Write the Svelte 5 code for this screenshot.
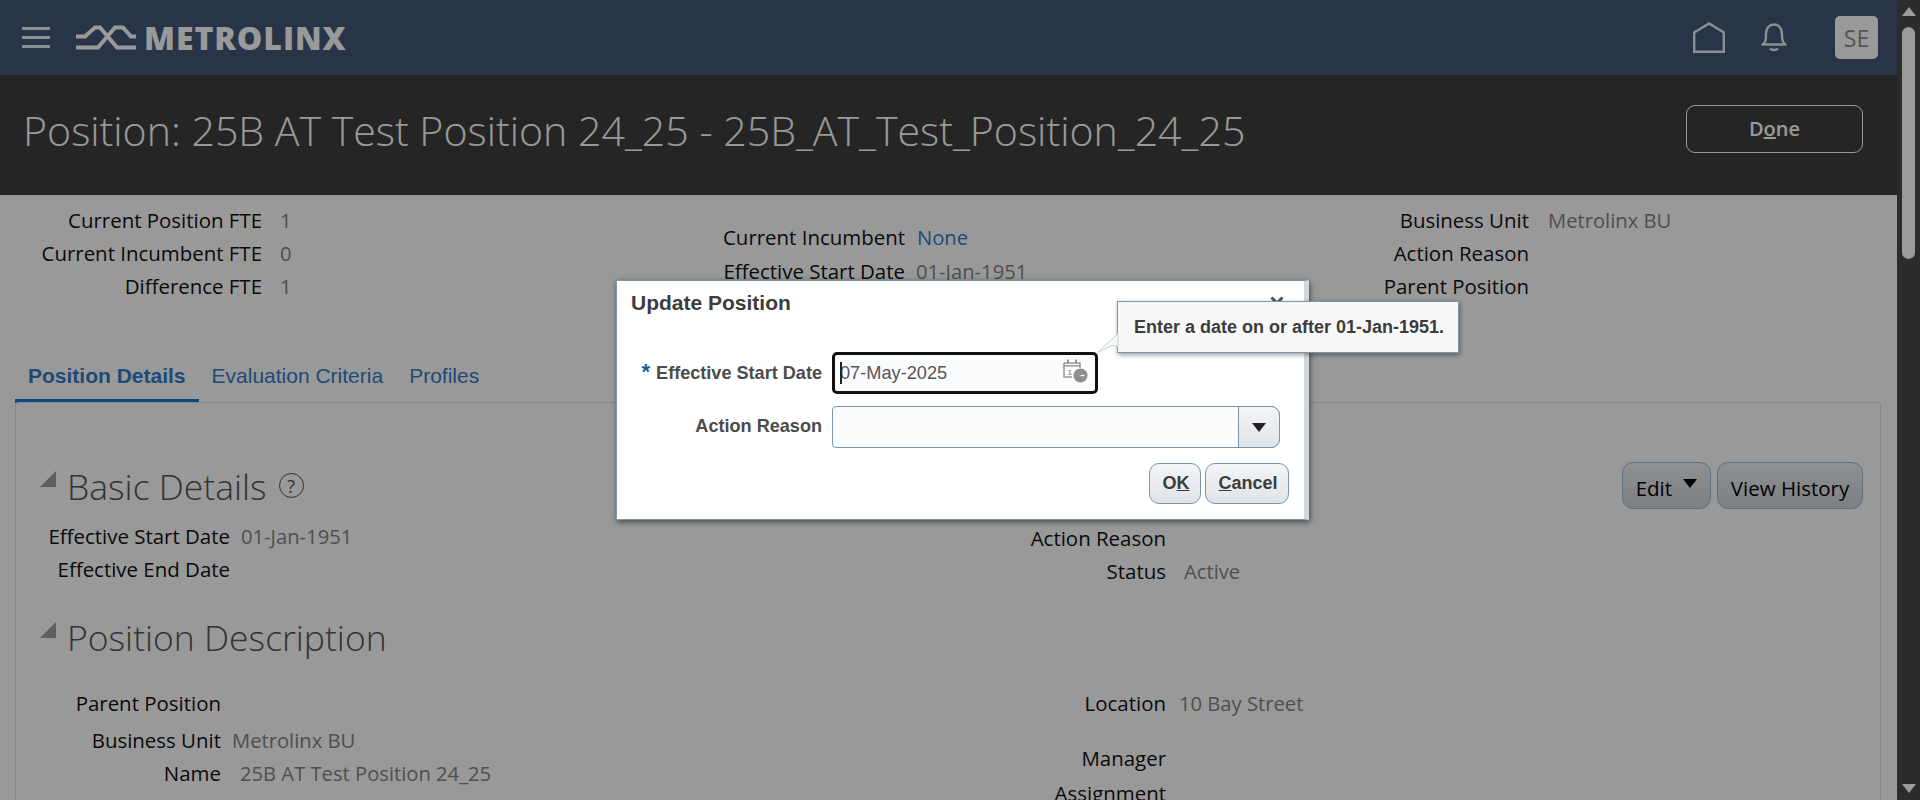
<script>
  const hdrL = [['Current Position FTE','1'],['Current Incumbent FTE','0'],['Difference FTE','1']];
  const hdrR = [['Business Unit','Metrolinx BU'],['Action Reason',''],['Parent Position','']];
</script>

<div class="page">
  <header class="top">
    <div class="burger"><i></i><i></i><i></i></div>
    <svg class="logo" viewBox="0 0 60 25" width="60" height="25" aria-hidden="true">
      <path d="M0 11.500H9L19 2.500H24L41 22.500H60" fill="none" stroke="#fff" stroke-width="4"/>
      <path d="M0 22.500H22L39 2.500H47L55 11.500H60" fill="none" stroke="#fff" stroke-width="4"/>
    </svg>
    <span class="brand">METROLINX</span>
    <span class="spacer"></span>
    <svg class="home" viewBox="0 0 32 31" width="32" height="31" aria-hidden="true">
      <path d="M1.200 10.500L16 1.500L30.800 10.500V29.800H1.200Z" fill="none" stroke="#e8eef5" stroke-width="2.400"/>
    </svg>
    <svg class="bell" viewBox="0 0 26 29" width="26" height="29" aria-hidden="true">
      <path d="M1.500 21.500C4.500 19.500 5 17 5 11C5 5 8.500 1.500 13 1.500S21 5 21 11C21 17 21.500 19.500 24.500 21.500Z" fill="none" stroke="#e8eef5" stroke-width="2.400" stroke-linejoin="round"/>
      <path d="M9 25.500C10.500 27.500 15.500 27.500 17 25.500" fill="none" stroke="#e8eef5" stroke-width="2.400"/>
    </svg>
    <div class="avatar">SE</div>
  </header>

  <section class="title">
    <h1>Position: 25B AT Test Position 24_25 - 25B_AT_Test_Position_24_25</h1>
    <button class="done">D<u>o</u>ne</button>
  </section>

  <main class="content">
    <div class="hdr">
      <dl class="col c1">
        {#each hdrL as [k, v]}<div class="row"><dt>{k}</dt><dd>{v}</dd></div>{/each}
      </dl>
      <dl class="col c2">
        <div class="row"><dt>Current Incumbent</dt><dd class="link">None</dd></div>
        <div class="row"><dt>Effective Start Date</dt><dd>01-Jan-1951</dd></div>
      </dl>
      <dl class="col c3">
        {#each hdrR as [k, v]}<div class="row"><dt>{k}</dt><dd>{v}</dd></div>{/each}
      </dl>
    </div>

    <nav class="tabs">
      <span class="tab active">Position Details</span>
      <span class="tab">Evaluation Criteria</span>
      <span class="tab">Profiles</span>
    </nav>

    <div class="panel">
      <div class="sec-head first">
        <span class="tri"></span>
        <h2>Basic Details</h2>
        <span class="help">?</span>
        <span class="spacer"></span>
        <button class="btn edit">Edit <span class="caret"></span></button>
        <button class="btn hist">View History</button>
      </div>
      <div class="two basic">
        <div>
          <div class="f w1"><b>Effective Start Date</b><span>01-Jan-1951</span></div>
          <div class="f w1"><b>Effective End Date</b><span></span></div>
        </div>
        <div class="right">
          <div class="f w2"><b>Action Reason</b><span></span></div>
          <div class="f w2"><b>Status</b><span>Active</span></div>
        </div>
      </div>
      <div class="sec-head second">
        <span class="tri"></span>
        <h2>Position Description</h2>
      </div>
      <div class="two desc">
        <div>
          <div class="f w3"><b>Parent Position</b><span></span></div>
          <div class="f w3 g1"><b>Business Unit</b><span>Metrolinx BU</span></div>
          <div class="f w4"><b>Name</b><span>25B AT Test Position 24_25</span></div>
        </div>
        <div>
          <div class="f w5"><b>Location</b><span>10 Bay Street</span></div>
          <div class="f w5 g2"><b>Manager</b><span></span></div>
          <div class="f w5 g3"><b>Assignment</b><span></span></div>
        </div>
      </div>
    </div>
  </main>

  <div class="scrim"></div>

  <aside class="scroll">
    <span class="up"></span>
    <span class="thumb"></span>
    <span class="down"></span>
  </aside>

  <div class="dialog" role="dialog">
    <div class="dlg-title">Update Position</div>
    <svg class="close" viewBox="0 0 14 14" width="14" height="14" aria-hidden="true">
      <path d="M1.500 1.500L12.500 12.500M12.500 1.500L1.500 12.500" stroke="#555" stroke-width="3"/>
    </svg>
    <div class="form">
      <div class="frow">
        <label for="esd"><em>*</em> Effective Start Date</label>
        <div class="input focused" id="esd">
          <span class="caretline"></span>07-May-2025
          <svg class="cal" viewBox="0 0 25 24" width="25" height="24" aria-hidden="true">
            <path d="M1 4H17V9M1 4V18H9" fill="none" stroke="#9a9a9a" stroke-width="1.600"/>
            <path d="M5 0.500V5M13 0.500V5" stroke="#9a9a9a" stroke-width="2"/>
            <path d="M1 6.800H17" stroke="#9a9a9a" stroke-width="1.500"/>
            <text x="4.500" y="15.500" font-size="8" font-weight="700" fill="#9a9a9a" font-family="Liberation Sans">1</text>
            <circle cx="17.500" cy="16.500" r="7" fill="#8e8e8e"/>
            <path d="M17.500 16.500H21.500" stroke="#fff" stroke-width="1.300"/>
          </svg>
        </div>
      </div>
      <div class="frow">
        <label for="ar">Action Reason</label>
        <div class="select" id="ar"><span class="sel-btn"><span class="dark-caret"></span></span></div>
      </div>
    </div>
    <div class="actions">
      <button class="dbtn">O<u>K</u></button>
      <button class="dbtn"><u>C</u>ancel</button>
    </div>
  </div>

  <div class="note">
    <svg class="tail" viewBox="0 0 22 22" width="22" height="22" aria-hidden="true">
      <path d="M21 0.500L0.500 19.500L15 12.500L21 13.500Z" fill="#f8f8f8" stroke="#c3d0dc" stroke-width="1"/>
    </svg>
    Enter a date on or after 01-Jan-1951.
  </div>
</div>

<style>
  :global(body) { margin: 0; background: #fff; }
  .page {
    position: relative; width: 1920px; height: 800px; overflow: hidden;
    font-family: "Open Sans", "Noto Sans", sans-serif; font-size: 20px; color: #000;
  }
  .top {
    height: 75px; background: #445878; display: flex; align-items: center;
    padding-right: 19px; margin-right: 23px;
  }
  .burger { display: flex; flex-direction: column; gap: 6.500px; margin-left: 22px; width: 28px; }
  .burger i { display: block; height: 2.500px; background: #e8eef5; }
  .logo { margin-left: 26px; }
  .brand { margin-left: 8px; font: 800 32px "Open Sans", sans-serif; color: #fff; letter-spacing: .95px; }
  .spacer { flex: 1; }
  .home { margin-right: 36px; }
  .bell { margin-right: 48px; }
  .avatar {
    width: 43px; height: 43px; border-radius: 5px; background: #fff; color: #8e8e8e;
    font: 400 23px "Open Sans", sans-serif; display: flex; align-items: center; justify-content: center;
  }
  .title {
    height: 120px; background: #3f3f3f; display: flex; align-items: center;
    padding: 0 34px 0 23px; margin-right: 23px;
  }
  .title h1 {
    flex: 1; margin: 0 0 10px; font: 300 41.100px "Open Sans", sans-serif; color: #fff; white-space: nowrap;
  }
  .done {
    width: 177px; height: 48px; margin-bottom: 12px; padding: 0 0 2px; background: transparent; border: 1px solid #fff; border-radius: 9px;
    color: #fff; font: 600 20px "Open Sans", sans-serif;
  }
  .content { position: relative; margin-right: 23px; height: 605px; background: #fff; }
  .hdr { position: relative; height: 175px; }
  .col { position: absolute; margin: 0; }
  .row { display: flex; height: 33px; align-items: center; }
  dt { font-weight: 500; font-size: 20.450px; text-align: right; color: #111; white-space: nowrap; }
  dd { margin: 0 0 0 18px; color: #858585; font-size: 20.200px; white-space: nowrap; }
  .c1 { left: 0; top: 8px; } .c1 dt { width: 262px; }
  .c2 { left: 0; top: 25px; } .c2 .row { height: 34px; } .c2 dt { width: 905px; } .c2 dd { margin-left: 11px; }
  .c3 { left: 0; top: 8px; } .c3 dt { width: 1529px; } .c3 dd { margin-left: 19px; }
  .c2 dd.link { color: #2f7bc8; margin-left: 12px; }
  .tabs { position: absolute; left: 15px; top: 161px; display: flex; }
  .tab { padding: 0 13px; font: 400 21px/40px "Liberation Sans", sans-serif; color: #337cc8; white-space: nowrap; }
  .tab.active { font-weight: 700; box-sizing: content-box; height: 43px; border-bottom: 4px solid #127cd9; padding: 0 13px; }
  .panel {
    position: absolute; left: 15px; top: 207px; width: 1866px; height: 440px; box-sizing: border-box;
    border: 1px solid #dfe4e9; border-radius: 3px 3px 0 0;
  }
  .sec-head { display: flex; align-items: center; padding-left: 24px; padding-right: 17px; }
  .sec-head.first { margin-top: 59px; height: 47px; }
  .sec-head.second { margin-top: 27px; height: 46px; }
  .tri { width: 0; height: 0; border-left: 16px solid transparent; border-bottom: 16px solid #9e9e9e; margin-right: 11px; margin-bottom: 14px; }
  h2 { margin: 0; font: 300 35.500px "Open Sans", sans-serif; color: #555; white-space: nowrap; }
  .help {
    width: 23px; height: 23px; border: 1.500px solid #555; border-radius: 50%; margin-left: 12px;
    font: 400 18px "Open Sans", sans-serif; color: #555; display: flex; align-items: center; justify-content: center;
  }
  .btn {
    height: 47px; padding: 4px 0 0; border: 1px solid #9dbbd5; border-radius: 11px;
    background: linear-gradient(#eef1f4, #d0d6dc); color: #000; font: 500 20.500px "Open Sans", sans-serif; white-space: nowrap;
  }
  .edit { width: 89px; }
  .hist { width: 146px; margin-left: 6px; }
  .caret { display: inline-block; width: 0; height: 0; border: 7px solid transparent; border-top: 9px solid #000; border-bottom: 0; margin: 0 0 8px 6px; }
  .two { display: grid; grid-template-columns: 1fr 1fr; }
  .basic { margin-top: 10px; }
  .desc { margin-top: 26px; }
  .f { display: flex; height: 33px; align-items: center; }
  .f b { font-weight: 500; font-size: 20.450px; color: #111; text-align: right; white-space: nowrap; }
  .f span { margin-left: 11px; color: #858585; font-size: 20.200px; white-space: nowrap; }
  .right { margin-top: 2px; }
  .w1 b { width: 214px; }
  .w2 b { width: 218px; } .w2 span { margin-left: 18px; }
  .w3 b { width: 205px; } .w3 span { margin-left: 11px; }
  .w4 b { width: 205px; } .w4 span { margin-left: 19px; }
  .w5 b { width: 218px; } .w5 span { margin-left: 13px; }
  .g1 { margin-top: 4px; }
  .g2 { margin-top: 22px; }
  .g3 { margin-top: 2px; }
  .scrim { position: absolute; left: 0; right: 23px; top: 0; bottom: 0; background: rgba(0, 0, 0, .4); }
  .scroll { position: absolute; right: 0; top: 0; width: 23px; height: 800px; background: #2c2c2c; }
  .thumb { position: absolute; left: 5px; top: 27px; width: 13px; height: 232px; background: #9b9b9b; border-radius: 7px; }
  .up, .down { position: absolute; left: 5px; width: 0; height: 0; border: 7px solid transparent; }
  .up { top: 7px; border-bottom: 9px solid #9b9b9b; border-top: 0; }
  .down { bottom: 7px; border-top: 9px solid #9b9b9b; border-bottom: 0; }
  .dialog {
    position: absolute; left: 616px; top: 280px; width: 693px; height: 240px; box-sizing: border-box;
    background: #fff; border: 1px solid #7b95ab; border-right: 5px solid #d3d8dd; box-shadow: 1px 2px 6px rgba(0,0,0,.55);
    font-family: "Liberation Sans", sans-serif; color: #444;
  }
  .dlg-title { position: absolute; left: 14px; top: 10px; font: 700 21px "Liberation Sans", sans-serif; color: #3c3c3c; }
  .close { position: absolute; right: 20px; top: 15px; }
  .form { position: absolute; top: 71px; left: 0; width: 100%; display: flex; flex-direction: column; gap: 12px; }
  .frow { display: flex; align-items: center; height: 42px; }
  label { width: 205px; padding-bottom: 2px; text-align: right; font: 700 18.100px "Liberation Sans", sans-serif; color: #4b4b4b; white-space: nowrap; }
  label em { font-style: normal; color: #0a65ad; font-size: 22px; margin-right: 1px; }
  .input {
    position: relative; margin-left: 10px; width: 266px; height: 42px; box-sizing: border-box;
    border: 3px solid #111; border-radius: 5px; background: #fbfcfe;
    font: 400 18.200px/36px "Liberation Sans", sans-serif; color: #555; padding-left: 5px;
  }
  .caretline { position: absolute; left: 5px; top: 7px; width: 1.500px; height: 22px; background: #222; }
  .cal { position: absolute; right: 7px; top: 4px; }
  .select {
    position: relative; margin-left: 10px; width: 448px; height: 42px; box-sizing: border-box;
    border: 1px solid #7b95ab; border-radius: 4px 9px 9px 4px; background: #fbfcfe;
  }
  .sel-btn {
    position: absolute; right: -1px; top: -1px; width: 42px; height: 42px; box-sizing: border-box;
    border: 1px solid #7b95ab; border-radius: 0 9px 9px 0; background: linear-gradient(#f2f4f6, #e1e4e7);
    display: flex; align-items: center; justify-content: center;
  }
  .dark-caret { width: 0; height: 0; border: 7px solid transparent; border-top: 9px solid #222; border-bottom: 0; }
  .actions { position: absolute; right: 15px; top: 182px; display: flex; gap: 4px; }
  .dbtn {
    height: 41px; border: 1px solid #7b95ab; border-radius: 10px; background: linear-gradient(#f2f4f6, #e1e4e7);
    font: 700 18px "Liberation Sans", sans-serif; color: #3c3c3c; padding: 0 0 0 2px;
  }
  .dbtn:first-child { width: 52px; }
  .dbtn:last-child { width: 84px; }
  .note {
    position: absolute; left: 1117px; top: 301px; width: 342px; height: 52px; box-sizing: border-box;
    background: #f8f8f8; border: 1px solid #7b95ab; box-shadow: 1px 2px 5px rgba(0,0,0,.4);
    font: 700 18px/50px "Liberation Sans", sans-serif; color: #3c3c3c; padding-left: 16px; white-space: nowrap;
  }
  .tail { position: absolute; left: -21px; top: 31px; }
</style>
